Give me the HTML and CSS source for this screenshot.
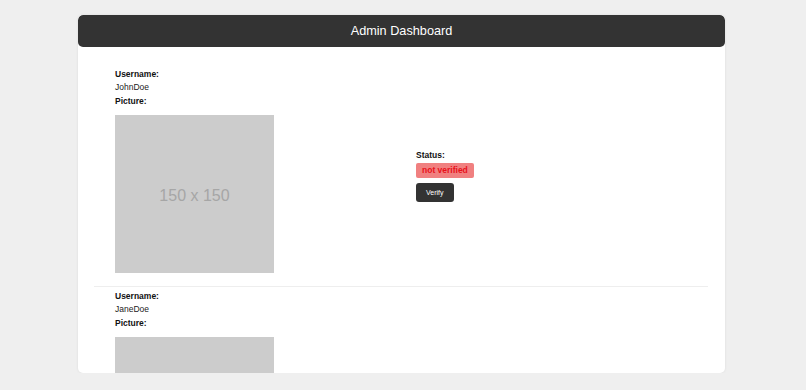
FILE: index.html
```html
<!DOCTYPE html>
<html lang="en">
<head>
<meta charset="utf-8">
<title>Admin Dashboard</title>
<link rel="stylesheet" href="styles.css">
</head>
<body>
<div class="dashboard">
  <header class="topbar"><h1 class="title">Admin Dashboard</h1></header>
  <main class="panel">
    <section class="user">
      <div class="user-info">
        <div class="field">
          <div class="label">Username:</div>
          <div class="value">JohnDoe</div>
        </div>
        <div class="field">
          <div class="label">Picture:</div>
        </div>
        <div class="picture">150 x 150</div>
      </div>
      <div class="user-status">
        <div class="label">Status:</div>
        <span class="badge">not verified</span>
        <button class="verify">Verify</button>
      </div>
    </section>
    <section class="user">
      <div class="user-info">
        <div class="field">
          <div class="label">Username:</div>
          <div class="value">JaneDoe</div>
        </div>
        <div class="field">
          <div class="label">Picture:</div>
        </div>
        <div class="picture">150 x 150</div>
      </div>
      <div class="user-status">
        <div class="label">Status:</div>
        <span class="badge">not verified</span>
        <button class="verify">Verify</button>
      </div>
    </section>
  </main>
</div>
</body>
</html>
```
FILE: styles.css
```css
html, body {
  margin: 0;
  padding: 0;
  background: #efefef;
  font-family: "Liberation Sans", Arial, sans-serif;
  color: #111;
}
.dashboard {
  width: 647px;
  height: 358px;
  margin: 15px 0 0 78px;
  display: flex;
  flex-direction: column;
  background: #fff;
  border-radius: 5px;
  box-shadow: 0 0 3px rgba(0,0,0,0.08);
  overflow: hidden;
}
.topbar {
  flex: none;
  height: 32px;
  background: #333;
  border-radius: 5px;
  display: flex;
  align-items: center;
  justify-content: center;
}
.title {
  margin: 0;
  font-size: 12.7px;
  font-weight: normal;
  color: #fff;
  line-height: 1;
}
.panel {
  flex: 1;
  overflow: hidden;
  padding: 18px 17px 0 16px;
}
.user {
  display: grid;
  grid-template-columns: 1fr 1fr;
  column-gap: 30px;
  align-items: center;
  padding: 3px 21px 13px 21px;
  border-bottom: 1px solid #eee;
}
.user-info {
  display: flex;
  flex-direction: column;
}
.label {
  font-size: 8.5px;
  font-weight: bold;
  line-height: 13px;
}
.value {
  font-size: 8.5px;
  line-height: 13px;
  color: #222;
}
.field + .field {
  margin-top: 1px;
}
.picture {
  margin-top: 7px;
  width: 159px;
  height: 158px;
  background: #cccccc;
  color: #a6a6a6;
  font-size: 16px;
  padding-top: 4px;
  box-sizing: border-box;
  display: flex;
  align-items: center;
  justify-content: center;
}
.user-status {
  display: flex;
  flex-direction: column;
  align-items: flex-start;
  padding-top: 10px;
}
.badge {
  margin-top: 1px;
  display: inline-block;
  background: #f08080;
  color: #e8101a;
  font-size: 8.5px;
  font-weight: bold;
  line-height: 11px;
  padding: 2px 6px;
  border-radius: 2px;
}
.verify {
  margin-top: 5px;
  height: 19px;
  padding: 0 10px;
  border: none;
  border-radius: 3px;
  background: #333;
  color: #fff;
  font-family: "Liberation Sans", Arial, sans-serif;
  font-size: 7px;
  cursor: pointer;
}
```
